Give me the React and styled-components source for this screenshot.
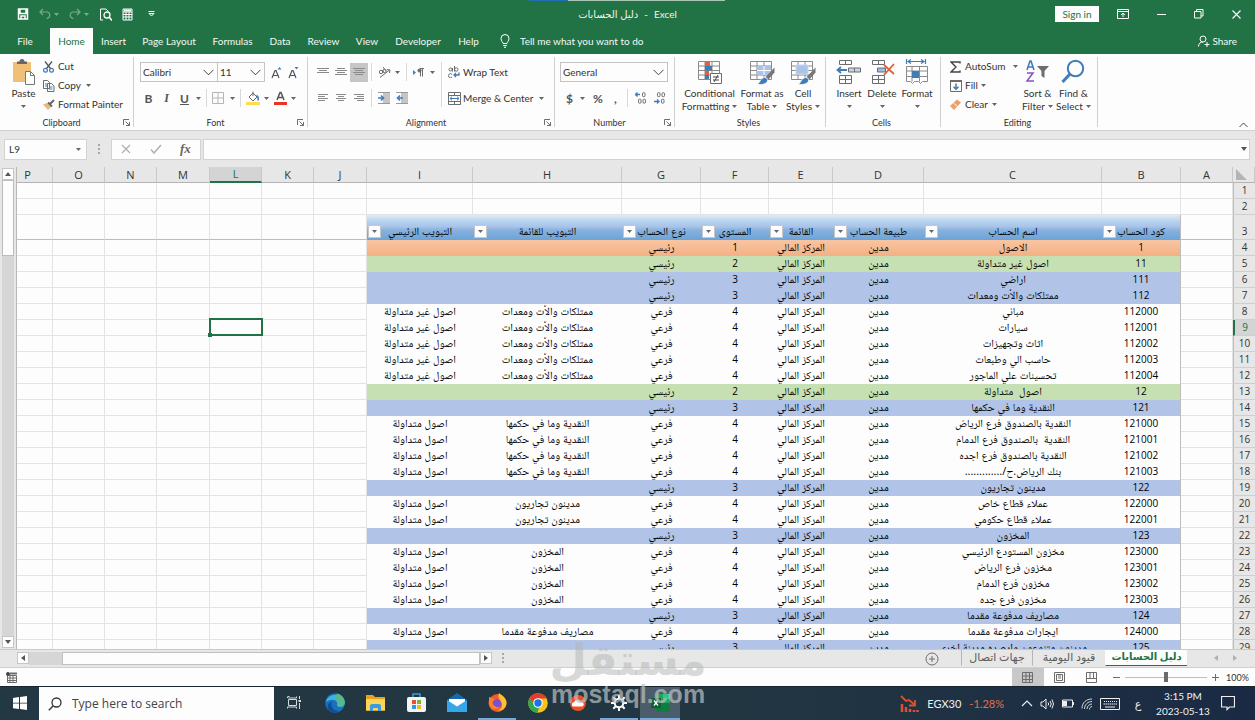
import React from 'react';
import styled, { createGlobalStyle } from 'styled-components';

const UI = 'Lato, "Open Sans", "DejaVu Sans", sans-serif';
const SHEET = '"Open Sans", "Noto Naskh Arabic", "DejaVu Sans Condensed", sans-serif';
const C = {
  green: '#217346', chrome: '#e6e7e6', paper: '#fdfdfd', line: '#d0d0d0', grid: '#e2e3e2',
  text: '#333', icon: '#6d6d6d', blue: '#3f7cb8', orange: '#e0603a',
};

const GlobalStyle = createGlobalStyle`
  *, *::before, *::after { box-sizing: border-box; }
  body { margin: 0; background: ${C.chrome}; }
  button, input, select { font: inherit; color: inherit; margin: 0; }
  svg { display: block; flex: none; }
`;

const Window = styled.div`
  position: relative;
  display: flex;
  flex-direction: column;
  height: 100vh;
  overflow: hidden;
  font: 10px/13px ${UI};
  color: ${C.text};
  background: ${C.chrome};
`;

/* ---------- title bar ---------- */
const TitleBar = styled.header`
  display: grid;
  grid-template-columns: 1fr auto 1fr;
  align-items: center;
  height: 28px;
  background: ${C.green};
  color: #eef5f0;
`;
const Progress = styled.div`
  position: absolute;
  top: 0;
  left: 529px;
  width: 196px;
  height: 1px;
  background: linear-gradient(90deg, #1f6fb5 20%, #a9c7b5 20%);
`;
const QuickAccess = styled.div`
  display: flex;
  align-items: center;
  gap: 10px;
  padding-left: 17px;
`;
const Plain = styled.button`
  display: flex;
  align-items: center;
  gap: ${p => p.$gap ?? 0}px;
  padding: 0;
  border: 0;
  background: none;
  white-space: nowrap;
  opacity: ${p => (p.$dim ? 0.4 : 1)};
`;
const DocTitle = styled.h1`
  display: flex;
  gap: 6px;
  margin: 0;
  font-size: 10px;
  font-weight: 400;
`;
const WindowButtons = styled.div`
  display: flex;
  align-items: center;
  justify-content: flex-end;
  gap: 28px;
  padding-right: 14px;
`;
const SignIn = styled.button`
  width: 44px;
  height: 16px;
  padding: 0;
  border: 0;
  background: #fcfdfc;
  color: ${C.green};
  margin-right: -10px;
`;

/* ---------- ribbon tabs ---------- */
const TabRow = styled.nav`
  display: flex;
  align-items: stretch;
  height: 26px;
  background: ${C.green};
  color: #f4f9f6;
`;
const RibbonTab = styled.button`
  width: ${p => p.$w}px;
  padding: 0;
  border: 0;
  white-space: nowrap;
  background: ${p => (p.$active ? C.paper : 'transparent')};
  color: ${p => (p.$active ? C.green : 'inherit')};
`;
const TellMe = styled(Plain)`
  margin-left: 13px;
`;
const Share = styled(Plain)`
  margin: 0 18px 0 auto;
`;

/* ---------- ribbon ---------- */
const Ribbon = styled.section`
  position: relative;
  display: flex;
  height: 77px;
  padding-top: 3px;
  background: ${C.paper};
  border-bottom: 1px solid #cfd0cf;
`;
const GroupBox = styled.div`
  display: flex;
  flex-direction: column;
  width: ${p => p.$w}px;
  height: 70px;
  border-right: 1px solid ${C.line};
`;
const GroupBody = styled.div`
  display: flex;
  flex: 1;
  gap: ${p => p.$gap ?? 0}px;
  padding: ${p => p.$pad ?? '0'};
`;
const GroupFoot = styled.div`
  display: flex;
  align-items: center;
  height: 9px;
  padding-right: 3px;
  font-size: 9px;
  line-height: 9px;
  text-align: center;
  span { flex: 1; }
`;
const Stack = styled.div`
  display: flex;
  flex-direction: column;
  gap: ${p => p.$gap ?? 0}px;
  padding-top: ${p => p.$top ?? 0}px;
`;
const ToolRow = styled.div`
  display: flex;
  align-items: center;
  height: 20px;
  gap: ${p => p.$gap ?? 6}px;
  padding-left: ${p => p.$left ?? 0}px;
`;
const BigButton = styled.button`
  display: flex;
  flex-direction: column;
  align-items: center;
  width: ${p => p.$w}px;
  padding: 2px 0 0;
  border: 0;
  background: none;
  line-height: 13px;
  white-space: nowrap;
  svg + span { margin-top: 2px; }
`;
const Caption = styled.span`
  display: flex;
  align-items: center;
  gap: 3px;
  height: 13px;
`;
const Divider = styled.span`
  width: 1px;
  height: ${p => p.$h ?? 18}px;
  background: #d9d9d9;
`;
const Toggle = styled(Plain)`
  justify-content: center;
  width: 18px;
  height: 19px;
  margin: 0 -3px;
  background: #c6c6c6;
`;
const SelectShell = styled.label`
  position: relative;
  display: flex;
  align-items: center;
  width: ${p => p.$w}px;
  height: 20px;
  margin-right: ${p => (p.$join ? -1 : 0)}px;
  border: 1px solid #c4c4c4;
  background: ${C.paper};
  svg { position: absolute; right: 3px; pointer-events: none; }
`;
const Select = styled.select`
  appearance: none;
  width: 100%;
  height: 100%;
  padding: 0 2px;
  border: 0;
  border-radius: 0;
  background: transparent;
`;
const Glyph = styled.b`
  font-size: 12px;
  width: ${p => p.$w ?? 9}px;
  text-align: center;
  color: #555;
  font-style: ${p => (p.$i ? 'italic' : 'normal')};
  font-family: ${p => (p.$i ? '"Liberation Serif", serif' : UI)};
  text-decoration: ${p => (p.$u ? 'underline' : 'none')};
`;
const Collapse = styled(Plain)`
  margin: auto 7px 2px auto;
`;

/* ---------- formula bar ---------- */
const FormulaBar = styled.div`
  display: flex;
  align-items: center;
  height: 36px;
  padding: 0 5px 0 4px;
`;
const NameBox = styled.div`
  display: flex;
  align-items: center;
  justify-content: space-between;
  width: 83px;
  height: 21px;
  padding-right: 5px;
  border: 1px solid #d2d3d2;
  background: ${C.paper};
`;
const BareInput = styled.input`
  flex: 1;
  min-width: 0;
  height: 100%;
  padding: 0 4px;
  border: 0;
  outline: 0;
  background: transparent;
`;
const Dots = styled.span`
  width: 2px;
  height: 11px;
  margin: ${p => p.$m};
  background: repeating-linear-gradient(#a8a8a8 0 2px, transparent 2px 4px);
`;
const FxBox = styled.div`
  display: flex;
  align-items: center;
  justify-content: space-around;
  width: 90px;
  height: 21px;
  margin-right: 2px;
  border: 1px solid #d2d3d2;
  background: ${C.paper};
`;
const Fx = styled.i`
  font: italic 700 13px/16px "Liberation Serif", serif;
  color: #666;
`;
const FormulaInput = styled(NameBox)`
  flex: 1;
  width: auto;
  padding-right: 2px;
`;

/* ---------- sheet ---------- */
const SheetArea = styled.main`
  display: flex;
  flex: 1;
  min-height: 0;
`;
const VScroll = styled.div`
  display: flex;
  flex-direction: column;
  width: 16px;
  padding: 1px 2px 1px 2px;
`;
const ScrollButton = styled.button`
  display: grid;
  place-items: center;
  width: 12px;
  height: 12px;
  padding: 0;
  border: 1px solid #c6c6c6;
  background: ${C.paper};
`;
const Track = styled.div`
  flex: 1;
  background: #d6d6d6;
`;
const VThumb = styled.div`
  height: 76px;
  border: 1px solid #bcbcbc;
  background: ${C.paper};
`;
const SheetClip = styled.div`
  flex: 1;
  min-width: 0;
  overflow: hidden;
  border-left: 1px solid #b9b9b9;
`;
const Grid = styled.table`
  width: 100%;
  table-layout: fixed;
  border-spacing: 0;
  background: ${C.paper};
  text-align: center;
  font-family: ${SHEET};
  color: #000;
`;
const ColHead = styled.th`
  height: 16px;
  padding: ${p => (p.$cut ? '0 14px 0 0' : '0')};
  font-size: 11px;
  line-height: 14px;
  font-weight: 400;
  color: ${p => (p.$on ? C.green : '#333')};
  background: ${p => (p.$on ? '#d4d4d4' : C.chrome)};
  border-right: 1px solid #c9c9c9;
  border-bottom: ${p => (p.$on ? `2px solid ${C.green}` : '1px solid #b4b4b4')};
  svg { margin-left: 3px; }
`;
const RowHead = styled.th`
  padding: 0;
  height: ${p => p.$h}px;
  line-height: 15px;
  font-size: 10px;
  font-weight: 400;
  vertical-align: bottom;
  color: ${p => (p.$on ? C.green : '#333')};
  background: ${p => (p.$on ? '#d4d4d4' : C.chrome)};
  border-bottom: 1px solid #cfcfcf;
  border-left: ${p => (p.$on ? `2px solid ${C.green}` : '1px solid #bdbdbd')};
`;
const FILLS = {
  head: 'linear-gradient(#dcebf8 0, #b3cdee 30%, #aac5e8 45%, #88b2de 60%, #6ba3d8 100%)',
  1: 'linear-gradient(#f8c5a2, #f4b083)',
  2: '#c6e0b4',
  3: '#b1c4e7',
};
const Cell = styled.td`
  position: relative;
  padding: 0;
  height: 16px;
  line-height: 15px;
  border-right: 1px solid ${p => (p.$lines ? C.grid : 'transparent')};
  border-bottom: 1px solid ${p => (p.$lines ? C.grid : 'transparent')};
  ${p => p.$frozen && 'border-bottom-color: #bdbdbd;'}
`;
const Data = styled.td`
  position: relative;
  padding: 0 0 2px;
  height: 16px;
  line-height: 14px;
  white-space: pre;
  overflow: hidden;
  font-size: ${p => (p.$num ? 10 : 11)}px;
  vertical-align: bottom;
  background: ${p => FILLS[p.$fill] || C.paper};
  ${p => p.$edge && 'border-right: 1px solid #bdbdbd;'}
`;
const Selected = styled(Cell)`
  z-index: 1;
  &::before {
    content: '';
    position: absolute;
    inset: -2px -2px -1px -1px;
    border: 2px solid ${C.green};
  }
  &::after {
    content: '';
    position: absolute;
    left: -2px;
    bottom: -2px;
    width: 4px;
    height: 4px;
    background: ${C.green};
  }
`;
const FilterButton = styled(ScrollButton)`
  position: absolute;
  left: 1px;
  bottom: 2px;
  width: 13px;
  height: 13px;
`;

/* ---------- sheet tabs / status ---------- */
const SheetBar = styled.div`
  display: flex;
  height: 19px;
  padding-left: 17px;
  border-top: 1px solid #c9c9c9;
  border-bottom: 1px solid #cfd0cf;
`;
const HScroll = styled.div`
  display: flex;
  width: 475px;
  height: 13px;
  margin-top: 2px;
`;
const HTrack = styled.div`
  width: 33px;
  background: #d6d6d6;
`;
const HThumb = styled.div`
  flex: 1;
  border: 1px solid #c0c0c0;
  background: ${C.paper};
`;
const SheetTabs = styled.div`
  display: flex;
  align-items: flex-start;
  margin-left: auto;
  color: #5b5b5b;
`;
const AddSheet = styled(Plain)`
  margin: 2px 22px 0 0;
`;
const SheetTab = styled.button`
  width: ${p => p.$w}px;
  height: 16px;
  padding: 0 0 2px;
  border: 0;
  border-left: 1px solid ${p => (p.$on ? 'transparent' : '#b5b5b5')};
  border-bottom: 1px solid ${p => (p.$on ? C.green : 'transparent')};
  background: ${p => (p.$on ? C.paper : 'none')};
  color: ${p => (p.$on ? C.green : 'inherit')};
  font-size: ${p => (p.$on ? 10 : 11)}px;
  line-height: 13px;
  font-weight: ${p => (p.$on ? 700 : 400)};
`;
const TabArrows = styled.div`
  display: flex;
  align-items: center;
  gap: 13px;
  width: 68px;
  height: 16px;
  padding-left: 26px;
`;
const StatusBar = styled.footer`
  display: flex;
  align-items: center;
  height: 18px;
  padding: 0 6px;
  background: ${C.paper};
  font-size: 9px;
`;
const ViewButton = styled(Plain)`
  justify-content: center;
  width: 32px;
  height: 18px;
  background: ${p => (p.$on ? '#c8c8c8' : 'none')};
`;
const Views = styled.div`
  display: flex;
  margin-left: auto;
`;
const Zoom = styled.div`
  display: flex;
  align-items: center;
  gap: 5px;
  margin-left: 5px;
`;
const Slider = styled.input`
  appearance: none;
  width: 82px;
  height: 12px;
  background: linear-gradient(#bdbdbd, #bdbdbd) center / 100% 1px no-repeat;
  &::-webkit-slider-thumb {
    appearance: none;
    width: 4px;
    height: 10px;
    background: #6a6a6a;
  }
`;

/* ---------- taskbar ---------- */
const Taskbar = styled.div`
  display: flex;
  height: 34px;
  background: linear-gradient(90deg, #233843, #223642 60%, #1a2a44);
  border-top: 1px solid #17242c;
  color: #eef1f3;
`;
const Slot = styled.button`
  display: grid;
  place-items: center;
  width: ${p => p.$w}px;
  padding: 0;
  border: 0;
  border-bottom: 2px solid ${p => (p.$run ? '#76a9dc' : 'transparent')};
  background: ${p => (p.$on ? '#4b5d6b' : 'none')};
`;
const Search = styled.label`
  display: flex;
  align-items: center;
  gap: 6px;
  width: 235px;
  padding-left: 9px;
  background: ${C.paper};
  color: #333;
  font: 12px/16px "Open Sans", sans-serif;
  input::placeholder { color: #444; opacity: 1; }
`;
const Apps = styled.div`
  display: flex;
  justify-content: space-between;
  width: 364px;
  margin-left: 2px;
`;
const Tray = styled.div`
  display: flex;
  align-items: center;
  gap: 7px;
  margin-left: auto;
  padding-right: 20px;
`;
const Stock = styled.div`
  display: flex;
  align-items: center;
  gap: 8px;
  margin-right: 10px;
  font-size: 11px;
  b { font-weight: 400; color: #e0714a; }
`;
const Lang = styled.span`
  width: 22px;
  text-align: center;
  font-size: 11px;
`;
const Clock = styled.time`
  width: 54px;
  margin-right: 4px;
  font-size: 10px;
  line-height: 15px;
  text-align: center;
  white-space: nowrap;
`;
const Watermark = styled.div`
  position: absolute;
  left: 552px;
  bottom: 14px;
  width: 152px;
  display: flex;
  flex-direction: column;
  align-items: center;
  color: rgba(178, 180, 180, 0.5);
  pointer-events: none;
`;
const MarkArabic = styled.div`
  font: 700 43px/44px "DejaVu Sans", sans-serif;
`;
const MarkLatin = styled.div`
  color: rgba(190, 194, 196, 0.7);
  font: 700 25px/24px "Liberation Sans", sans-serif;
`;

/* ---------- icons ---------- */
const Svg = ({ w = 14, h = w, vb, children, ...r }) => (
  <svg width={w} height={h} viewBox={vb || `0 0 ${w} ${h}`} fill="none" stroke={C.icon} aria-hidden="true" {...r}>{children}</svg>
);
const Caret = ({ c = '#666' }) => <Svg w={5} h={3}><path d="M0 0h5L2.500 3z" fill={c} stroke="none" /></Svg>;
const Chevron = () => <Svg w={11} h={7}><path d="M.5.8 5.500 5.800 10.500.8" stroke="#444" /></Svg>;
const Launcher = () => <Svg w={7} h={7}><path d="M.5 6V.5H6M2.500 2.500l4 4M6.500 3v3.500H3" /></Svg>;
const Lines = ({ rows, w = 12 }) => (
  <Svg w={w} h={rows.length * 2 + 1}>
    {rows.map(([x, len], i) => <path key={i} d={`M${x} ${i * 2 + 0.5}h${len}`} stroke="#8a8a8a" />)}
  </Svg>
);
const Indent = ({ flip }) => (
  <Svg w={12} h={12}>
    <path d="M5 1h7v10H5z" fill="#c4c4c4" stroke="none" />
    <path d="M0 .5h12M0 11.500h12" stroke="#999" />
    <path d={flip ? 'M7 6H1.500M4 3.500 1.500 6 4 8.500' : 'M0 6h5.500M3 3.500 5.500 6 3 8.500'} stroke={C.blue} strokeWidth="1.600" />
  </Svg>
);
const Grow = ({ down }) => (
  <Svg w={11} h={13}>
    <path d="M1 12 4 4.500h1L8 12M2.200 9.500h4.600" stroke="#555" strokeWidth="1.200" />
    <path d={down ? 'M6.500 1h4l-2 2.500z' : 'M6.500 3.500h4l-2-2.500z'} fill={C.blue} stroke="none" />
  </Svg>
);
const Table3 = ({ children }) => (
  <Svg w={26} h={26}>
    <path d="M1.500 2.500h21v18h-21zM1.500 7h21M1.500 11.500h21M1.500 16h21M8 2.500v18M15 2.500v18" stroke="#8a8a8a" fill="#fff" />
    {children}
  </Svg>
);
const Brush = () => (
  <>
    <path d="M25.500 8.500v5l-6 7-3-2.500z" fill="#777" stroke="none" />
    <path d="M8 25c3 0 3-6 7.500-6.500 3 0 4 3 2 5S11 26 8 25z" fill={C.blue} stroke="#fff" strokeWidth=".7" />
  </>
);
const I = {
  save: <Svg w={12} stroke="#fff"><path d="M1.500 1h9v10h-9zM3 1v4.500h6V1M4 11V8h4v3" strokeWidth="1.500" /></Svg>,
  undo: <Svg w={12} stroke="#fff"><path d="M1 4h6.500a3 3 0 0 1 0 6.500M4 1 1 4l3 3" strokeWidth="1.200" /></Svg>,
  redo: <Svg w={12} stroke="#fff"><path d="M11 4H4.500a3 3 0 0 0 0 6.500M8 1l3 3-3 3" strokeWidth="1.200" /></Svg>,
  preview: <Svg w={13} h={13} stroke="#fff"><path d="M4 12H1.500V1H7l2.500 2.500" /><circle cx="8" cy="7" r="3" strokeWidth="1.300" /><path d="m10 9 3 3.500" strokeWidth="1.600" /></Svg>,
  calc: <Svg w={11} h={13} stroke="#fff"><path d="M1 1h9v11H1zM1 4h9M1 6.500h9M1 9h9M4 4v8M7 4v8" /><path d="M2 2.500h7" strokeWidth="2" /></Svg>,
  custom: <Svg w={7} h={6} stroke="#fff"><path d="M.5.5h6M1 2.500h5L3.500 5z" /></Svg>,
  ribbonOpt: <Svg w={12} h={10} stroke="#fff"><path d="M.5.5h11v9H.5zM.5 2.500h11M6 8V4.500M4 6l2-2 2 2" /></Svg>,
  min: <Svg w={9} h={10} stroke="#fff"><path d="M0 5.500h9" /></Svg>,
  restore: <Svg w={10} stroke="#fff"><path d="M.5 2.500h6.500v6.500H.5zM2.500 2.500v-2H9V7H7" /></Svg>,
  close: <Svg w={9} stroke="#fff"><path d="m.5.5 8 8M8.500.5l-8 8" strokeWidth="1.100" /></Svg>,
  bulb: <Svg w={10} h={14} stroke="#fff"><path d="M3 9.500C3 8 1 7 1 4.500a4 4 0 0 1 8 0C9 7 7 8 7 9.500zM3.200 11.500h3.600M4 13.300h2" /></Svg>,
  person: <Svg w={12} stroke="#fff"><circle cx="5" cy="4" r="3" /><path d="M.5 11.500c0-3 2-4.500 4.500-4.500M9 7v5M6.500 9.500h5" /></Svg>,
  paste: <Svg w={23} h={26}><path d="M1 3h18v20H1z" fill="#f0c078" stroke="none" /><path d="M5 5V2.500h2.500a2.500 2.500 0 0 1 5 0H15V5z" fill="#666" stroke="none" /><path d="M13.500 12.500h5l4 4v9h-9z" fill="#fff" stroke="#777" /><path d="M18.500 12.500v4h4" stroke="#777" /></Svg>,
  cut: <Svg w={11} h={12}><path d="m2 .5 5.500 7M9 .5l-5.500 7" stroke="#555" strokeWidth="1.300" /><circle cx="2.500" cy="9.300" r="1.900" stroke={C.blue} strokeWidth="1.200" /><circle cx="8.500" cy="9.300" r="1.900" stroke={C.blue} strokeWidth="1.200" /></Svg>,
  copy: <Svg w={12} h={12}><path d="M.5.5h4l2 2v6h-6zM4.500 3.500h4l2.500 2.500v5.500H4.500z" fill="#fff" /><path d="M2 4h2M2 6h2M6 7h3.500M6 9h3.500" stroke={C.blue} /></Svg>,
  painter: <Svg w={12} h={11}><path d="M0 5.500 4 4l4 4-3 3z" fill="#f0b579" stroke="none" /><path d="m5 3.500 4 4M7 5l4-4" stroke="#666" strokeWidth="2" /></Svg>,
  border: <Svg w={12}><path d="M.5.5h11v11H.5zM6 .5v11M.5 6h11" stroke="#b5b5b5" /></Svg>,
  fillColor: <Svg w={14} h={14}><path d="m3 6 4-4 4 4-4 4z" fill="#fff" stroke="#666" /><path d="M7 5V.5" /><path d="M10.500 4.500c2 1 2 3 1.500 5" stroke={C.blue} strokeWidth="1.600" /><path d="M0 11h14v3H0z" fill="#ffdd4a" stroke="none" /></Svg>,
  fontColor: <Svg w={13} h={14}><path d="M3 9 6 1.500h1L10 9M4.200 6.500h4.600" stroke="#555" strokeWidth="1.500" /><path d="M0 11h13v3H0z" fill="#ea3323" stroke="none" /></Svg>,
  orient: <Svg w={13} h={11}><circle cx="3" cy="5" r="1.700" /><circle cx="6.500" cy="4" r="1.700" /><path d="m4 3 2 2.500M5 0l3 4M2 10.500 11.500 3M9 2.500l3 .5-.5 3" /></Svg>,
  rtl: <Svg w={11} h={9}><path d="m0 2 3 2.500L0 7z" fill={C.blue} stroke="none" /><path d="M7.500 8.500v-8M9.500 8.500v-8M11 .5H7" /><circle cx="6.500" cy="2.500" r="1.600" fill={C.icon} /></Svg>,
  wrap: <Svg w={12} h={12}><circle cx="2.500" cy="3.500" r="1.500" /><path d="M4.500 2v3.500M6.500 0v5.500M4 8.500a2 2 0 1 0 0 2.500" /><circle cx="8.300" cy="3.500" r="1.700" /><path d="M11 6.500v2.500H6M8 7 6 9l2 2" stroke={C.blue} strokeWidth="1.300" /></Svg>,
  merge: <Svg w={13} h={13}><path d="M.5.5h12v12H.5zM.5 3.500h12M.5 9.500h12M6.500.5v3M6.500 9.500v3" /><path d="M2 6.500h9M4 4.700 2 6.500l2 1.800M9 4.700l2 1.800-2 1.800" stroke={C.blue} /></Svg>,
  decInc: <Svg w={12} h={12}><path d="M0 2.500h5M2.500.5l-2 2 2 2" stroke={C.blue} strokeWidth="1.300" /><rect x="7.500" y=".7" width="2.500" height="4" rx="1" /><rect x="3.500" y="7.200" width="2.500" height="4" rx="1" /><rect x="8" y="7.200" width="2.500" height="4" rx="1" /></Svg>,
  decDec: <Svg w={12} h={12}><path d="M0 9.500h5M3 7.500l2 2-2 2" stroke={C.blue} strokeWidth="1.300" /><rect x="3.500" y=".7" width="2.500" height="4" rx="1" /><rect x="8" y=".7" width="2.500" height="4" rx="1" /><rect x="7.500" y="7.200" width="2.500" height="4" rx="1" /></Svg>,
  cond: <Table3><path d="M8 3h5v4H8zM8 12h4v4H8z" fill={C.orange} stroke="none" /><path d="M8 7h7v4.500H8zM8 16h4v4H8z" fill={C.blue} stroke="none" /><path d="M13.500 14.500h11v10h-11z" fill="#fff" /><path d="M16 18h6M16 21h6M21 16l-4 7" stroke="#444" /></Table3>,
  fmtTable: <Table3><path d="M8 7h14v9H8z" fill="#a9c4e8" stroke="none" /><path d="M8 11.500h14M15 7v9" stroke="#fff" /><Brush /></Table3>,
  cellStyle: <Table3><path d="M6 6h12v9H6z" fill="#a9c4e8" stroke="#c9d9ee" /><Brush /></Table3>,
  insert: <Svg w={26} h={26}><path d="M3.500 1.500h12v4h-12zM9.500 1.500v4M3.500 16.500h12v8h-12zM9.500 16.500v8M3.500 20.500h12" /><path d="M12.500 9h12v4h-12zM18.500 9v4" fill="#c3d6ee" /><path d="M1.500 11H11M5 8l-3.500 3L5 14" stroke={C.blue} strokeWidth="1.800" /></Svg>,
  del: <Svg w={26} h={26}><path d="M3.500 1.500h12v4h-12zM9.500 1.500v4M3.500 16.500h12v8h-12zM9.500 16.500v8M3.500 20.500h12" /><path d="M8.500 9h8v4h-8z" fill="#9dbde4" /><path d="m15 6 10 9M25 5 15 16" stroke={C.orange} strokeWidth="1.800" /></Svg>,
  format: <Svg w={26} h={26}><path d="M2.500 0v5M21.500 0v5M4 2.500h16M7 .5l-3 2 3 2M17 .5l3 2-3 2" stroke={C.blue} strokeWidth="1.200" /><path d="M2.500 7.500h21v15h-5l-2 2-2-2h-4l-2 2-2-2h-4zM2.500 12h21M2.500 17.500h21M8 7.500v15M15.500 7.500v15" stroke="#8a8a8a" /><path d="M8 12h7v7H8z" fill={C.blue} stroke="none" /></Svg>,
  sum: <Svg w={11} h={12}><path d="M10 2.500V1H1l5 5-5 5h9V9.500" stroke="#444" strokeWidth="1.400" /></Svg>,
  fill: <Svg w={12} h={12}><path d="M.5 1h11v10.500H.5z" /><path d="M0 1h12" strokeWidth="2" /><path d="M6 3.500V9M3.500 6.800 6 9.300l2.500-2.500" stroke={C.blue} strokeWidth="1.500" /></Svg>,
  clear: <Svg w={11} h={11}><path d="m0 7 7-6.500 4 3L4 11z" fill="#e8a06f" stroke="none" /><path d="m3.500 4 4 3.500" stroke="#fff" /></Svg>,
  sort: <Svg w={24} h={26}><path d="M2 11 5 2h1l3 9M3 8h5" stroke={C.blue} strokeWidth="1.600" /><path d="M2 14h6L2 22h7" stroke="#8650c8" strokeWidth="1.500" /><path d="M12 7h12l-4.500 5v7l-3-2v-5z" fill="#6d6d6d" stroke="none" /></Svg>,
  find: <Svg w={24} h={26}><circle cx="14.500" cy="9.500" r="7.700" stroke={C.blue} strokeWidth="2" /><path d="m9 15-7.500 8" stroke={C.blue} strokeWidth="3" /></Svg>,
  up: <Svg w={9} h={6}><path d="m.5 5 4-4 4 4" stroke="#444" /></Svg>,
  x: <Svg w={10}><path d="m1 1 8 8M9 1 1 9" stroke="#b0b0b0" strokeWidth="1.200" /></Svg>,
  check: <Svg w={12} h={10}><path d="m1 5.500 3 3.500 7-8" stroke="#b0b0b0" strokeWidth="1.500" /></Svg>,
  corner: <Svg w={12} h={12}><path d="M0 0v11h11z" fill="#b4b4b4" stroke="none" /></Svg>,
  addSheet: <Svg w={14}><circle cx="7" cy="7" r="6" /><path d="M7 4v6M4 7h6" /></Svg>,
  macro: <Svg w={11} h={11}><path d="M1.500 3.500h9v7h-9zM1.500 6h9M1.500 8.500h9M4 3.500v7M7 3.500v7" /><path d="M4 1.500h7" strokeWidth="2" /><circle cx="2" cy="2" r="2" fill="#444" stroke="none" /></Svg>,
  vGrid: <Svg w={11} h={11}><path d="M.5.5h10v10H.5zM4 .5v10M7.500.5v10M.5 4h10M.5 7.500h10" /></Svg>,
  vPage: <Svg w={11} h={11}><path d="M.5.5h10v10H.5zM2.500 2.500h6v6h-6zM4 4h3M4 6h3" /></Svg>,
  vBreak: <Svg w={11} h={11}><path d="M.5.5h10v10H.5zM4 .5v5.500M7.500.5v5.500M.5 6.500h10" /></Svg>,
  win: <Svg w={14} stroke="none"><path d="m0 2 6-1v5.700H0zM7 .9 14 0v6.700H7zM0 7.500h6v5.600L0 12.200zM7 7.500h7V14l-7-.9z" fill="#fff" /></Svg>,
  search: <Svg w={14}><circle cx="8.500" cy="5.500" r="4.500" stroke="#333" strokeWidth="1.300" /><path d="M5.300 8.700.8 13.200" stroke="#333" strokeWidth="1.300" /></Svg>,
  taskView: <Svg w={14} h={13} stroke="#d5dadd"><path d="M1.500 3.500h8v6h-8zM1 .5h1.500M.5.5V2M9.500.5V2H1.500M.5 12.500V11h9v1.500M12.500 0v3M12.500 7v6" /><path d="M11.500 5h2.500" strokeWidth="2" /></Svg>,
  edge: <Svg w={20} stroke="none"><circle cx="10" cy="10" r="9.800" fill="#1a6fc0" /><path d="M1 9C3 0 18-1 19.800 9c.3 3-1.500 4.800-5 4.800-2 0-3-1-2.500-2.500C13 8 8 4 1 9z" fill="#3cb7d8" /><path d="M12 .5c5 1 8 5 7.800 9-.3 3-2 4.300-5 4.300-2 0-3-1-2.500-2.500.8-3-1-5-3-6z" fill="#55b98c" /><path d="M7 9c-2 4 1 9 7 9-3 2-9 2-11-2C2 12 4 9 7 9z" fill="#0e4f94" /></Svg>,
  folder: <Svg w={19} h={16} stroke="none"><path d="M0 0h7l2 2h10v14H0z" fill="#e8a31c" /><path d="M0 4h19v11H0z" fill="#fbd558" /><path d="M4 16v-5q0-2 2-2h7q2 0 2 2v5h-3v-3H7v3z" fill="#3b9be0" /></Svg>,
  store: <Svg w={19} h={19} stroke="none"><path d="M6 5V1h7v4" stroke="#3b9be0" strokeWidth="1.500" /><rect y="4" width="19" height="15" rx="2" fill="#f4f4f4" /><path d="M5 7h4v4H5z" fill="#e8502e" /><path d="M10 7h4v4h-4z" fill="#7cb82f" /><path d="M5 12h4v4H5z" fill="#2f9be8" /><path d="M10 12h4v4h-4z" fill="#f4b81f" /></Svg>,
  mail: <Svg w={20} h={19} stroke="none"><path d="m0 7 10-7 10 7v12H0z" fill="#1667b0" /><path d="M2 6h16v8H2z" fill="#fff" /><path d="m0 7 10 6.500L20 7v12H0z" fill="#37a5ea" /></Svg>,
  firefox: <Svg w={19} stroke="none"><circle cx="9.500" cy="10" r="9" fill="#f2592b" /><path d="M11 0c4 3 8 6 7.500 11-1 5-5 7-9 6.500 5-2 5-5 4-8-2-3-4-5-2.500-9.500z" fill="#ffbf2e" /><circle cx="9" cy="10.500" r="4.300" fill="#7b4fd0" /><path d="M1 4c2 1 4 1 6 3-2 0-3 2-2 4s4 4 7 3c-4 4-11 2-11-4z" fill="#f6842c" /></Svg>,
  chrome: <Svg w={20} stroke="none"><circle cx="10" cy="10" r="9.800" fill="#fbc116" /><path d="M1.500 5A9.800 9.800 0 0 1 18.500 5.500H10L6 12z" fill="#e33b2e" /><path d="M1.500 5 7 13l4 1.500-1.500 5.200A9.800 9.800 0 0 1 1.500 5z" fill="#2da94f" /><circle cx="10" cy="10" r="4.800" fill="#fff" /><circle cx="10" cy="10" r="3.700" fill="#1a73e8" /></Svg>,
  cloud: <Svg w={16} stroke="none"><circle cx="8" cy="8" r="8" fill="#ef4f27" /><path d="M3 11.500a2.300 2.300 0 0 1 1-4.300 3.400 3.400 0 0 1 6.500-.2 2.300 2.300 0 0 1 1.500 4.500z" fill="#fff" /></Svg>,
  gear: <Svg w={16} stroke="#fff"><circle cx="8" cy="8" r="4.300" strokeWidth="2" /><path d="M8 0v3M8 13v3M0 8h3M13 8h3M2.300 2.300l2.200 2.200M11.500 11.500l2.200 2.200M13.700 2.300l-2.200 2.200M4.500 11.500l-2.200 2.200" strokeWidth="2" /></Svg>,
  excel: <Svg w={19} h={18} stroke="none"><path d="M5 0h14v18H5z" fill="#21a366" /><path d="M12 0h7v5h-7z" fill="#33c481" /><path d="M5 9h14v9H5z" fill="#107c41" /><path d="M0 4h10v10H0z" fill="#0e6134" /><path d="m3 6.500 4 5M7 6.500l-4 5" stroke="#fff" strokeWidth="1.300" /></Svg>,
  stock: <Svg w={19} h={18} stroke="#e0502e"><path d="m1 1 5 5 3-1 6 5M15 5v5.500H9" strokeWidth="1.800" /><path d="M2 17V9M6 17v-5M10 17v-3M14 17v-2M17.500 17v-2" strokeWidth="2.500" /></Svg>,
  trayUp: <Svg w={12} h={7} stroke="#eee"><path d="m1 6 5-5 5 5" strokeWidth="1.200" /></Svg>,
  speaker: <Svg w={14} h={12} stroke="#eee"><path d="M1 4h2l3-3v10L3 8H1zM8 4.500q1.500 1.500 0 3M10 3q2.500 3 0 6M12 1.500q3 4.500 0 9" /></Svg>,
  battery: <Svg w={13} h={9} stroke="#eee"><path d="M1.500 1h10v7h-10zM12.500 3v3" /><path d="M2 2h4v5H2z" fill="#eee" stroke="none" /></Svg>,
  wifi: <Svg w={12} h={12} stroke="#cfd6dc"><path d="M1 10.500C1 5 5 1 11 1M3.500 11C3.500 6.500 7 3.500 11 3.500M6 11c0-3 2.500-5 5-5M8.500 11.500c0-1.500 1-3 2.500-3" /></Svg>,
  keyboard: <Svg w={20} h={12} stroke="#eee"><path d="M.5.5h19v11H.5zM3 3.500h14M3 6h14M5 9h10" /><path d="M3 3.500h14M3 6h14" strokeDasharray="1 1" stroke="#1c2c40" /></Svg>,
  bubble: <Svg w={14} h={15} stroke="#eee"><path d="M.5.5h13v10.500h-5L6 13.500V11H.5z" strokeWidth="1.200" /></Svg>,
};
const Arrow = ({ d, c = '#555' }) => {
  const p = { up: 'M0 5h6L3 1z', down: 'M0 1h6L3 5z', left: 'M5 0v6L1 3z', right: 'M1 0v6l4-3z' }[d];
  return <Svg w={6}><path d={p} fill={c} stroke="none" /></Svg>;
};

/* ---------- data ---------- */
const COLS = [['P'], ['O', 52], ['N', 52], ['M', 53], ['L', 52], ['K', 52], ['J', 53], ['I', 106], ['H', 149], ['G', 79], ['F', 68], ['E', 64], ['D', 91], ['C', 178], ['B', 79], ['A', 52]];
const HEADS = ['التبويب الرئيسي', 'التبويب للقائمة', 'نوع الحساب', 'المستوى', 'القائمة', 'طبيعة الحساب', 'اسم الحساب', 'كود الحساب'];
const NC = 'اصول غير متداولة', CU = 'اصول متداولة';
const FA = 'ممتلكات والأت ومعدات', CASH = 'النقدية وما في حكمها', DEB = 'مدينون تجاريون', INV = 'المخزون', PRE = 'مصاريف مدفوعة مقدما';
const ACCOUNTS = [
  ['1', 'الاصول', 1], ['11', NC, 2], ['111', 'اراضي', 3], ['112', FA, 3],
  ['112000', 'مباني', 4, FA, NC], ['112001', 'سيارات', 4, FA, NC], ['112002', 'اثاث وتجهيزات', 4, FA, NC],
  ['112003', 'حاسب الي وطبعات', 4, FA, NC], ['112004', 'تحسينات علي الماجور', 4, FA, NC],
  ['12', 'اصول  متداولة', 2], ['121', CASH, 3],
  ['121000', 'النقدية بالصندوق فرع الرياض', 4, CASH, CU], ['121001', 'النقدية  بالصندوق فرع الدمام', 4, CASH, CU],
  ['121002', 'النقدية بالصندوق فرع اجده', 4, CASH, CU], ['121003', 'بنك الرياض.ح/.............', 4, CASH, CU],
  ['122', DEB, 3], ['122000', 'عملاء قطاع خاص', 4, DEB, CU], ['122001', 'عملاء قطاع حكومي', 4, DEB, CU],
  ['123', INV, 3], ['123000', 'مخزون المستودع الرئيسي', 4, INV, CU], ['123001', 'مخزون فرع الرياض', 4, INV, CU],
  ['123002', 'مخزون فرع الدمام', 4, INV, CU], ['123003', 'مخزون فرع جده', 4, INV, CU],
  ['124', PRE, 3], ['124000', 'ايجارات مدفوعة مقدما', 4, PRE, CU], ['125', 'مدينون متنوعون وارصده مدينة اخرى', 3],
];
const LEFT = ['P', 'O', 'N', 'M', 'L', 'K', 'J'];
const TABS = [['File', 48], ['Home', 43], ['Insert', 41], ['Page Layout', 70], ['Formulas', 57], ['Data', 38], ['Review', 49], ['View', 38], ['Developer', 64], ['Help', 37]];

const Group = ({ name, w, launch, pad, gap, children }) => (
  <GroupBox $w={w}>
    <GroupBody $pad={pad} $gap={gap}>{children}</GroupBody>
    <GroupFoot><span>{name}</span>{launch && <Launcher />}</GroupFoot>
  </GroupBox>
);
const Pick = ({ label, value, w, join }) => (
  <SelectShell $w={w} $join={join}>
    <Select aria-label={label} defaultValue={value}><option>{value}</option></Select>
    <Chevron />
  </SelectShell>
);
const Tool = ({ icon, label, caret, gap = 4 }) => (
  <Plain $gap={gap} aria-label={label}>{icon}{caret && <Caret />}</Plain>
);
const Big = ({ icon, lines, w }) => (
  <BigButton $w={w}>
    {icon}
    <Caption>{lines[0]}</Caption>
    <Caption>{lines[1]}<Caret /></Caption>
  </BigButton>
);

const RibbonPanel = () => (
  <Ribbon>
    <Group name="Clipboard" w={134} launch pad="0 0 0 11px" gap={7}>
      <Big icon={I.paste} lines={['Paste', '']} w={25} />
      <Stack $top={3} $gap={6}>
        <Plain $gap={4}>{I.cut}Cut</Plain>
        <Plain $gap={3}>{I.copy}Copy&nbsp;<Caret /></Plain>
        <Plain $gap={3}>{I.painter}Format Painter</Plain>
      </Stack>
    </Group>
    <Group name="Font" w={174} launch pad="0 0 0 6px">
      <Stack $top={5} $gap={6}>
        <ToolRow $gap={6}>
          <ToolRow $gap={0}><Pick label="Font" value="Calibri" w={78} join /><Pick label="Font size" value="11" w={48} /></ToolRow>
          <Tool label="Increase font size" icon={<Grow />} />
          <Tool label="Decrease font size" icon={<Grow down />} />
        </ToolRow>
        <ToolRow $gap={5} $left={4}>
          <ToolRow $gap={9}>
            <Tool label="Bold" icon={<Glyph>B</Glyph>} />
            <Tool label="Italic" icon={<Glyph $i>I</Glyph>} />
            <Tool label="Underline" icon={<Glyph $u>U</Glyph>} caret gap={7} />
          </ToolRow>
          <Divider />
          <Tool label="Borders" icon={I.border} caret gap={6} />
          <Divider />
          <Tool label="Fill colour" icon={I.fillColor} caret />
          <Tool label="Font colour" icon={I.fontColor} caret />
        </ToolRow>
      </Stack>
    </Group>
    <Group name="Alignment" w={247} launch pad="0 0 0 9px" gap={6}>
      <Stack $top={5} $gap={6}>
        <ToolRow $gap={6}>
          <Tool label="Top align" icon={<Lines rows={[[0, 12], [2, 8], [0, 12], [9, 0]]} />} />
          <Tool label="Middle align" icon={<Lines rows={[[2, 8], [0, 12], [2, 8], [0, 12]]} />} />
          <Toggle aria-label="Bottom align" aria-pressed="true"><Lines rows={[[0, 12], [2, 8], [0, 12], [2, 8]]} /></Toggle>
          <Divider />
          <Tool label="Orientation" icon={I.orient} caret />
          <Divider />
          <Tool label="Text direction" icon={I.rtl} caret gap={6} />
        </ToolRow>
        <ToolRow $gap={6}>
          <Tool label="Align left" icon={<Lines rows={[[1, 10], [1, 7], [1, 10], [1, 7]]} />} />
          <Tool label="Centre" icon={<Lines rows={[[1, 10], [3, 6], [1, 10], [3, 6]]} />} />
          <Tool label="Align right" icon={<Lines rows={[[1, 10], [4, 7], [1, 10], [4, 7]]} />} />
          <Divider />
          <Tool label="Decrease indent" icon={<Indent />} />
          <Tool label="Increase indent" icon={<Indent flip />} />
        </ToolRow>
      </Stack>
      <Stack $top={5}><Divider $h={45} /></Stack>
      <Stack $top={5} $gap={6}>
        <ToolRow><Plain $gap={3}>{I.wrap}Wrap Text</Plain></ToolRow>
        <ToolRow><Plain $gap={2}>{I.merge}Merge &amp; Center</Plain><Caret /></ToolRow>
      </Stack>
    </Group>
    <Group name="Number" w={120} launch pad="0 0 0 5px">
      <Stack $top={5} $gap={6}>
        <Pick label="Number format" value="General" w={108} />
        <ToolRow $gap={7} $left={5}>
          <Tool label="Currency" icon={<Glyph>$</Glyph>} caret gap={6} />
          <Tool label="Percent" icon={<Glyph $w={12}>%</Glyph>} />
          <Tool label="Comma" icon={<Glyph>,</Glyph>} />
          <Divider />
          <Tool label="Increase decimal" icon={I.decInc} />
          <Tool label="Decrease decimal" icon={I.decDec} />
        </ToolRow>
      </Stack>
    </Group>
    <Group name="Styles" w={151} pad="0 0 0 7px" gap={3}>
      <Big icon={I.cond} lines={['Conditional', 'Formatting']} w={55} />
      <Big icon={I.fmtTable} lines={['Format as', 'Table']} w={44} />
      <Big icon={I.cellStyle} lines={['Cell', 'Styles']} w={32} />
    </Group>
    <Group name="Cells" w={115} pad="0 0 0 8px" gap={1}>
      <Big icon={I.insert} lines={['Insert', '']} w={30} />
      <Big icon={I.del} lines={['Delete', '']} w={34} />
      <Big icon={I.format} lines={['Format', '']} w={34} />
    </Group>
    <Group name="Editing" w={157} pad="0 0 0 9px">
      <Stack $top={3} $gap={6}>
        <Plain $gap={4}>{I.sum}AutoSum<span /><Caret /></Plain>
        <Plain $gap={3}>{I.fill}Fill<Caret /></Plain>
        <Plain $gap={4}>{I.clear}Clear<Caret /></Plain>
      </Stack>
      <Big icon={I.sort} lines={['Sort &', 'Filter']} w={38} />
      <Big icon={I.find} lines={['Find &', 'Select']} w={34} />
    </Group>
    <Collapse aria-label="Collapse ribbon">{I.up}</Collapse>
  </Ribbon>
);

const Sheet = () => (
  <Grid>
    <colgroup>{COLS.map(([c, w]) => <col key={c} width={w} />)}<col width={22} /></colgroup>
    <thead>
      <tr>
        {COLS.map(([c]) => <ColHead key={c} $on={c === 'L'} $cut={c === 'P'}>{c}</ColHead>)}
        <ColHead>{I.corner}</ColHead>
      </tr>
    </thead>
    <tbody>
      {[1, 2].map(n => (
        <tr key={n}>
          {COLS.map(([c]) => <Cell key={c} $lines />)}
          <RowHead $h={16}>{n}</RowHead>
        </tr>
      ))}
      <tr>
        {LEFT.map(c => <Cell key={c} $lines $frozen />)}
        {HEADS.map((h, i) => (
          <Data key={h} $fill="head" $edge={i === 7} dir="rtl">
            {h}
            <FilterButton aria-label="Filter"><Caret /></FilterButton>
          </Data>
        ))}
        <Cell $lines $frozen />
        <RowHead $h={25}>3</RowHead>
      </tr>
      {ACCOUNTS.map(([code, name, level, sub, main], i) => (
        <tr key={code}>
          {LEFT.map(c => (c === 'L' && i === 4 + 1 ? <Selected key={c} $lines /> : <Cell key={c} $lines />))}
          {[main, sub, level === 4 ? 'فرعي' : 'رئيسي', level, 'المركز المالي', 'مدين', name, code].map((v, k) => (
            <Data key={k} dir="rtl" $num={k === 3 || k === 7} $fill={level} $edge={k === 7}>{v}</Data>
          ))}
          <Cell $lines />
          <RowHead $h={16} $on={i === 5}>{i + 4}</RowHead>
        </tr>
      ))}
    </tbody>
  </Grid>
);

export default function App() {
  return (
    <Window>
      <GlobalStyle />
      <TitleBar>
        <QuickAccess>
          <Plain aria-label="Save">{I.save}</Plain>
          <Plain $dim $gap={3} aria-label="Undo">{I.undo}<Caret c="#fff" /></Plain>
          <Plain $dim $gap={3} aria-label="Redo">{I.redo}<Caret c="#fff" /></Plain>
          <Plain aria-label="Print preview">{I.preview}</Plain>
          <Plain aria-label="Calculator">{I.calc}</Plain>
          <Plain aria-label="Customise">&nbsp;&nbsp;{I.custom}</Plain>
        </QuickAccess>
        <DocTitle><span>دليل الحسابات</span><span>-</span><span>Excel</span></DocTitle>
        <WindowButtons>
          <SignIn>Sign in</SignIn>
          <Plain aria-label="Ribbon options">{I.ribbonOpt}</Plain>
          <Plain aria-label="Minimise">{I.min}</Plain>
          <Plain aria-label="Restore">{I.restore}</Plain>
          <Plain aria-label="Close">{I.close}</Plain>
        </WindowButtons>
        <Progress />
      </TitleBar>
      <TabRow>
        {TABS.map(([t, w]) => <RibbonTab key={t} $w={t === 'File' ? w + 2 : w} $active={t === 'Home'}>{t}</RibbonTab>)}
        <TellMe $gap={10}>{I.bulb}Tell me what you want to do</TellMe>
        <Share $gap={2}>{I.person}Share</Share>
      </TabRow>
      <RibbonPanel />
      <FormulaBar>
        <NameBox><BareInput aria-label="Name box" defaultValue="L9" /><Caret /></NameBox>
        <Dots $m="0 11px" />
        <FxBox>
          <Plain aria-label="Cancel">{I.x}</Plain>
          <Plain aria-label="Enter">{I.check}</Plain>
          <Plain aria-label="Insert function"><Fx>fx</Fx></Plain>
        </FxBox>
        <FormulaInput><BareInput aria-label="Formula" /><Arrow d="down" /></FormulaInput>
      </FormulaBar>
      <SheetArea>
        <VScroll>
          <ScrollButton aria-label="Scroll up"><Arrow d="up" /></ScrollButton>
          <VThumb />
          <Track />
          <ScrollButton aria-label="Scroll down"><Arrow d="down" /></ScrollButton>
        </VScroll>
        <SheetClip><Sheet /></SheetClip>
      </SheetArea>
      <SheetBar>
        <HScroll>
          <ScrollButton aria-label="Scroll left"><Arrow d="left" /></ScrollButton>
          <HTrack />
          <HThumb />
          <ScrollButton aria-label="Scroll right"><Arrow d="right" /></ScrollButton>
        </HScroll>
        <Dots $m="3px 10px" />
        <SheetTabs>
          <AddSheet aria-label="New sheet">{I.addSheet}</AddSheet>
          <SheetTab $w={71}>جهات اتصال</SheetTab>
          <SheetTab $w={73}>قيود اليومية</SheetTab>
          <SheetTab $w={82} $on>دليل الحسابات</SheetTab>
        </SheetTabs>
        <TabArrows><Arrow d="left" c="#b0b0b0" /><Arrow d="right" c="#b0b0b0" /></TabArrows>
      </SheetBar>
      <StatusBar>
        {I.macro}
        <Views>
          <ViewButton $on aria-label="Normal view">{I.vGrid}</ViewButton>
          <ViewButton aria-label="Page layout view">{I.vPage}</ViewButton>
          <ViewButton aria-label="Page break view">{I.vBreak}</ViewButton>
        </Views>
        <Zoom>
          <Plain aria-label="Zoom out"><Svg w={7}><path d="M0 3.500h7" /></Svg></Plain>
          <Slider type="range" aria-label="Zoom" defaultValue={50} />
          <Plain aria-label="Zoom in"><Svg w={7}><path d="M0 3.500h7M3.500 0v7" /></Svg></Plain>
          <span>&nbsp;100%</span>
        </Zoom>
      </StatusBar>
      <Taskbar>
        <Slot $w={39} aria-label="Start">{I.win}</Slot>
        <Search>{I.search}<BareInput aria-label="Search" placeholder="Type here to search" /></Search>
        <Slot $w={40} aria-label="Task view">{I.taskView}</Slot>
        <Apps>
          {['edge', 'folder', 'store', 'mail', 'firefox', 'chrome', 'cloud', 'gear', 'excel'].map(k => (
            <Slot key={k} $w={k === 'excel' ? 40 : 38} $run={['firefox', 'gear', 'excel'].includes(k)} $on={k === 'excel'} aria-label={k}>{I[k]}</Slot>
          ))}
        </Apps>
        <Tray>
          <Stock>{I.stock}<span>EGX30</span><b>-1.28%</b></Stock>
          {I.trayUp}{I.speaker}{I.battery}{I.wifi}{I.keyboard}
          <Lang>ع</Lang>
          <Clock>3:15 PM<br />2023-05-13</Clock>
          {I.bubble}
        </Tray>
      </Taskbar>
      <Watermark>
        <MarkArabic>مستقل</MarkArabic>
        <MarkLatin>mostaql.com</MarkLatin>
      </Watermark>
    </Window>
  );
}
